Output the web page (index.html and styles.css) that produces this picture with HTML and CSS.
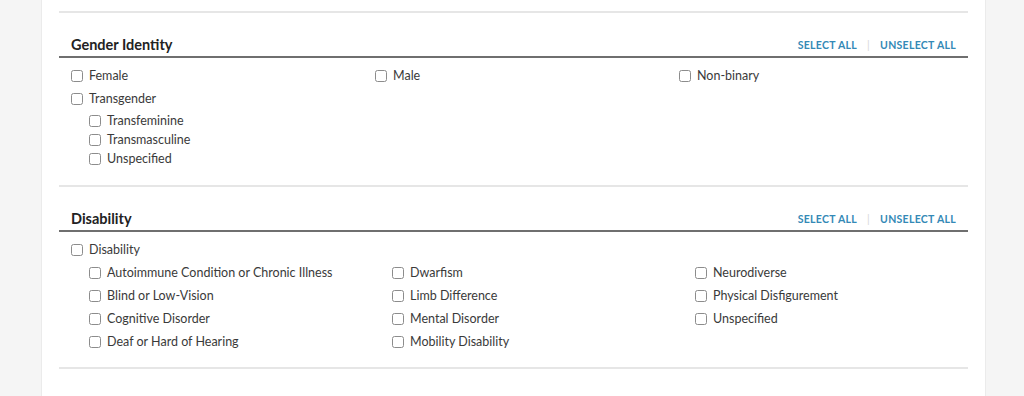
FILE: index.html
```html
<!DOCTYPE html>
<html lang="en">

<head>
    <meta charset="UTF-8">
    <meta name="viewport" content="width=device-width, initial-scale=1.0">
    <title>Filters</title>

    <link rel="stylesheet" href="styles.css">
</head>

<body>

    <div class="card">

        <section class="group">
            <div class="group__head">
                <h3 class="group__title">Gender Identity</h3>
                <div class="group__actions">
                    <a href="#" class="group__link">Select all</a>
                    <span class="group__sep">|</span>
                    <a href="#" class="group__link">Unselect all</a>
                </div>
            </div>
            <div class="group__body">
                <div class="options">
                    <label class="option"><input type="checkbox" class="option__box"> Female</label>
                    <label class="option"><input type="checkbox" class="option__box"> Male</label>
                    <label class="option"><input type="checkbox" class="option__box"> Non-binary</label>
                </div>
                <label class="option"><input type="checkbox" class="option__box"> Transgender</label>
                <div class="sub sub--tight">
                    <label class="option"><input type="checkbox" class="option__box"> Transfeminine</label>
                    <label class="option"><input type="checkbox" class="option__box"> Transmasculine</label>
                    <label class="option"><input type="checkbox" class="option__box"> Unspecified</label>
                </div>
            </div>
        </section>

        <section class="group">
            <div class="group__head">
                <h3 class="group__title">Disability</h3>
                <div class="group__actions">
                    <a href="#" class="group__link">Select all</a>
                    <span class="group__sep">|</span>
                    <a href="#" class="group__link">Unselect all</a>
                </div>
            </div>
            <div class="group__body group__body--short">
                <label class="option"><input type="checkbox" class="option__box"> Disability</label>
                <div class="sub sub--grid">
                    <label class="option"><input type="checkbox" class="option__box"> Autoimmune Condition or Chronic Illness</label>
                    <label class="option"><input type="checkbox" class="option__box"> Dwarfism</label>
                    <label class="option"><input type="checkbox" class="option__box"> Neurodiverse</label>
                    <label class="option"><input type="checkbox" class="option__box"> Blind or Low-Vision</label>
                    <label class="option"><input type="checkbox" class="option__box"> Limb Difference</label>
                    <label class="option"><input type="checkbox" class="option__box"> Physical Disfigurement</label>
                    <label class="option"><input type="checkbox" class="option__box"> Cognitive Disorder</label>
                    <label class="option"><input type="checkbox" class="option__box"> Mental Disorder</label>
                    <label class="option"><input type="checkbox" class="option__box"> Unspecified</label>
                    <label class="option"><input type="checkbox" class="option__box"> Deaf or Hard of Hearing</label>
                    <label class="option"><input type="checkbox" class="option__box"> Mobility Disability</label>
                </div>
            </div>
        </section>

        <div class="group group--end"></div>

    </div>

</body>

</html>
```

FILE: styles.css
```css
body {
    margin: 0;
    background: #f5f5f5;
    font-family: Lato, "Liberation Sans", sans-serif;
    color: #3a3a3a;
}

.card {
    margin-left: 41px;
    width: 909px;
    height: 396px;
    padding: 11px 17px 0;
    background: #fff;
    border-left: 1px solid #ebebeb;
    border-right: 1px solid #ebebeb;
}

/* ========== GROUP =========== */
.group {
    border-top: 2px solid #e6e6e6;
}

.group__head {
    display: flex;
    justify-content: space-between;
    align-items: center;
    padding: 23px 12px 2px;
    border-bottom: 2px solid #6f6f6f;
}

.group__title {
    margin: 0;
    font-size: 14.5px;
    line-height: 18px;
    font-weight: 700;
    color: #222;
}

.group__actions {
    display: flex;
    align-items: center;
    font-size: 10.5px;
    font-weight: 700;
    letter-spacing: 0.3px;
}

.group__link {
    color: #3489b6;
    text-decoration: none;
    text-transform: uppercase;
}

.group__sep {
    margin: 0 10px;
    color: #d6d6d6;
    font-weight: 400;
}

.group__body {
    padding: 6px 12px 17px;
}

.group__body--short {
    padding-top: 6px;
    padding-bottom: 14px;
}

/* ========== OPTIONS =========== */
.options {
    display: grid;
    grid-template-columns: repeat(3, 304px);
}

.option {
    display: flex;
    align-items: center;
    height: 23px;
    font-size: 12.5px;
}

.option__box {
    appearance: none;
    -webkit-appearance: none;
    box-sizing: border-box;
    flex: none;
    width: 12px;
    height: 12px;
    margin: 0 6px 0 0;
    border: 1px solid #8c8c8c;
    border-radius: 2.5px;
    background: #fff;
}

.sub {
    padding-left: 18px;
}

.sub--tight {
    padding-top: 1px;
}

.sub--tight .option {
    height: 19px;
}

.sub--grid {
    display: grid;
    grid-template-columns: repeat(3, 303px);
}

.group--end {
    height: 0;
}
```
